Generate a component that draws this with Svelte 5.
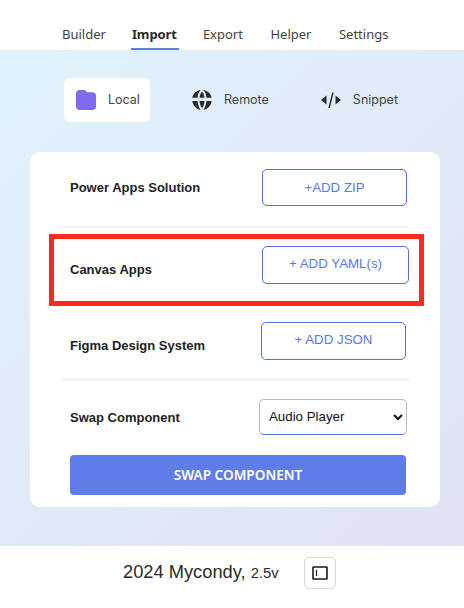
<script>
  const tabs = [
    { name: 'Builder' },
    { name: 'Import', active: true },
    { name: 'Export' },
    { name: 'Helper' },
    { name: 'Settings' }
  ];
</script>

<div class="page">
  <nav class="tabs">
    {#each tabs as t}
      <span class="tab" class:active={t.active}>{t.name}</span>
    {/each}
  </nav>

  <main class="body">
    <div class="sources">
      <div class="source selected">
        <svg width="20" height="20" viewBox="0 0 20 20"><path fill="#7f6af0" d="M3.500 0H8c1.600 0 2.300 1 3 2.300h5.500C18.500 2.300 20 3.800 20 5.800V16.500C20 18.500 18.500 20 16.500 20H3.500C1.500 20 0 18.500 0 16.500V3.500C0 1.500 1.500 0 3.500 0Z"/></svg>
        <span>Local</span>
      </div>
      <div class="source remote">
        <svg width="20" height="20" viewBox="0 0 20 20" fill="#2b2b2b">
          <path d="M8.600.1C6.900 1.900 5.900 4.500 5.600 7.800H.3C1 3.800 4.400.7 8.600.1Z"/>
          <path d="M11.400.1c4.200.6 7.600 3.700 8.300 7.700h-5.300C14.100 4.500 13.100 1.900 11.400.1Z"/>
          <path d="M10 1.500c1.400 1.600 2.200 3.700 2.500 6.300h-5C7.800 5.200 8.600 3.100 10 1.500Z"/>
          <path d="M.3 11h5.300c.3 3.600 1.300 6.300 3 8.900C4.400 19.300 1 15.500.3 11Z"/>
          <path d="M14.400 11h5.300c-.7 4.500-4.100 8.300-8.300 8.900 1.700-2.600 2.700-5.300 3-8.900Z"/>
          <path d="M7.500 11h5c-.3 3-1.100 5.300-2.500 7.300C8.600 16.300 7.800 14 7.500 11Z"/>
        </svg>
        <span>Remote</span>
      </div>
      <div class="source snippet">
        <svg width="20" height="18" viewBox="0 0 20 18" fill="#2b2b2b">
          <path d="M5.500 4.500V13.500L0 9Z"/>
          <path d="M14.500 4.500V13.500L20 9Z"/>
          <path d="M11.200 1.500 12.700 1.500 8.800 17 7.300 17Z"/>
        </svg>
        <span>Snippet</span>
      </div>
    </div>

    <section class="card">
      <div class="row first">
        <span class="label">Power Apps Solution</span>
        <button class="add zip">+ADD ZIP</button>
      </div>
      <hr class="thin" />
      <div class="row second">
        <span class="label">Canvas Apps</span>
        <button class="add yaml">+ ADD YAML(s)</button>
      </div>
      <div class="row third">
        <span class="label">Figma Design System</span>
        <button class="add json">+ ADD JSON</button>
      </div>
      <hr class="thick" />
      <div class="row fourth">
        <span class="label">Swap Component</span>
        <select class="picker">
          <option>Audio Player</option>
        </select>
      </div>
      <button class="swap">SWAP COMPONENT</button>
      <div class="highlight"></div>
    </section>
  </main>

  <footer class="foot">
    <span class="brand">2024 Mycondy, <small>2.5v</small></span>
    <button class="toggle" aria-label="Toggle sidebar">
      <svg width="16" height="14" viewBox="0 0 16 14" fill="none" stroke="#1a1a1a">
        <rect x="1" y="1" width="14" height="12" stroke-width="1.600" rx="0.500" />
        <path d="M4.500 4v6" stroke-width="1.200" />
      </svg>
    </button>
  </footer>
</div>

<style>
  :global(body) {
    margin: 0;
    background: #fff;
  }

  .page {
    width: 464px;
    height: 608px;
    display: flex;
    flex-direction: column;
    overflow: hidden;
  }

  .tabs {
    height: 50px;
    flex: none;
    box-sizing: border-box;
    display: flex;
    align-items: flex-end;
    gap: 27.500px;
    padding-left: 62px;
    background: #fff;
    font: 13px/1 "Noto Sans", sans-serif;
    color: #3f3f3f;
  }

  .tab {
    height: 22px;
    box-sizing: border-box;
  }

  .tab.active {
    color: #2a2a2a;
    font-weight: 700;
    letter-spacing: -0.100px;
    width: 48px;
    padding-left: 1px;
    margin-left: -2.500px;
    margin-right: -3.500px;
    border-bottom: 2px solid #5f7de9;
  }

  .body {
    flex: 1;
    background: linear-gradient(135deg, #e0f3fd 0%, #e0e2f1 100%);
    padding: 28px 24px 39px 30px;
    box-sizing: border-box;
  }

  .sources {
    display: flex;
    align-items: center;
    height: 44px;
    margin-left: 34px;
    font: 12.500px/1 Inter, sans-serif;
    color: #454545;
  }

  .source {
    display: flex;
    align-items: center;
    gap: 12px;
  }

  .selected {
    width: 86px;
    height: 44px;
    box-sizing: border-box;
    padding-left: 12px;
    background: #fff;
    border-radius: 6px;
  }

  .remote {
    margin-left: 42px;
  }

  .snippet {
    margin-left: 52px;
  }

  .card {
    position: relative;
    width: 410px;
    height: 355px;
    box-sizing: border-box;
    margin-top: 30px;
    padding: 17px 33px 12px 40px;
    background: #fff;
    border-radius: 10px;
  }

  .row {
    display: flex;
    justify-content: space-between;
    align-items: center;
  }

  .label {
    font: 700 13px/1 "Liberation Sans", sans-serif;
    color: #222;
  }

  .add {
    height: 37px;
    box-sizing: border-box;
    padding: 0 0 2px;
    background: #fff;
    border: 1px solid #4f70e8;
    border-radius: 5px;
    color: #5a78e8;
    font: 13.300px/1 "Liberation Sans", sans-serif;
  }

  hr {
    border: none;
    background: #f3f3f4;
    margin-left: -8px;
  }

  .thin {
    height: 2px;
    width: 347px;
    margin-top: 20px;
    margin-bottom: 0;
  }

  .thick {
    height: 3px;
    width: 347px;
    margin-top: 18px;
    margin-bottom: 0;
  }

  .zip {
    width: 145px;
    padding-bottom: 0;
  }

  .second {
    margin-top: 18px;
    margin-right: -2px;
  }

  .second .label {
    margin-top: 8px;
  }

  .yaml {
    width: 147px;
    height: 38px;
  }

  .third {
    margin-top: 38px;
    margin-right: 1px;
  }

  .third .label {
    margin-top: 9px;
  }

  .json {
    width: 145px;
    height: 38px;
  }

  .fourth {
    margin-top: 18px;
  }

  .picker {
    width: 148px;
    height: 36px;
    box-sizing: border-box;
    padding: 0 0 2px 5px;
    background: #fff;
    border: 1px solid #b8b8b8;
    border-bottom-color: #4f70e8;
    border-radius: 5px;
    color: #111;
    font: 13.300px "Liberation Sans", sans-serif;
  }

  .swap {
    display: block;
    width: 336px;
    height: 40px;
    margin-top: 20px;
    padding: 0;
    background: #5f7de9;
    border: none;
    border-radius: 4px;
    color: #fff;
    font: 600 13.600px/1 "Noto Sans", sans-serif;
  }

  .highlight {
    position: absolute;
    left: 19px;
    top: 82px;
    width: 375px;
    height: 72px;
    box-sizing: border-box;
    border: 5px solid #f72c1c;
    pointer-events: none;
  }

  .foot {
    height: 62px;
    flex: none;
    box-sizing: border-box;
    padding: 0 0 9px 123px;
    display: flex;
    align-items: center;
    gap: 25px;
    background: #fff;
  }

  .brand {
    font: 18.300px/1 "Liberation Sans", sans-serif;
    color: #2b2b2b;
  }

  .brand small {
    font-size: 14.800px;
  }

  .toggle {
    width: 32px;
    height: 32px;
    padding: 0;
    display: flex;
    align-items: center;
    justify-content: center;
    background: #fff;
    border: 1px solid #d9d9d9;
    border-radius: 5px;
  }
</style>
